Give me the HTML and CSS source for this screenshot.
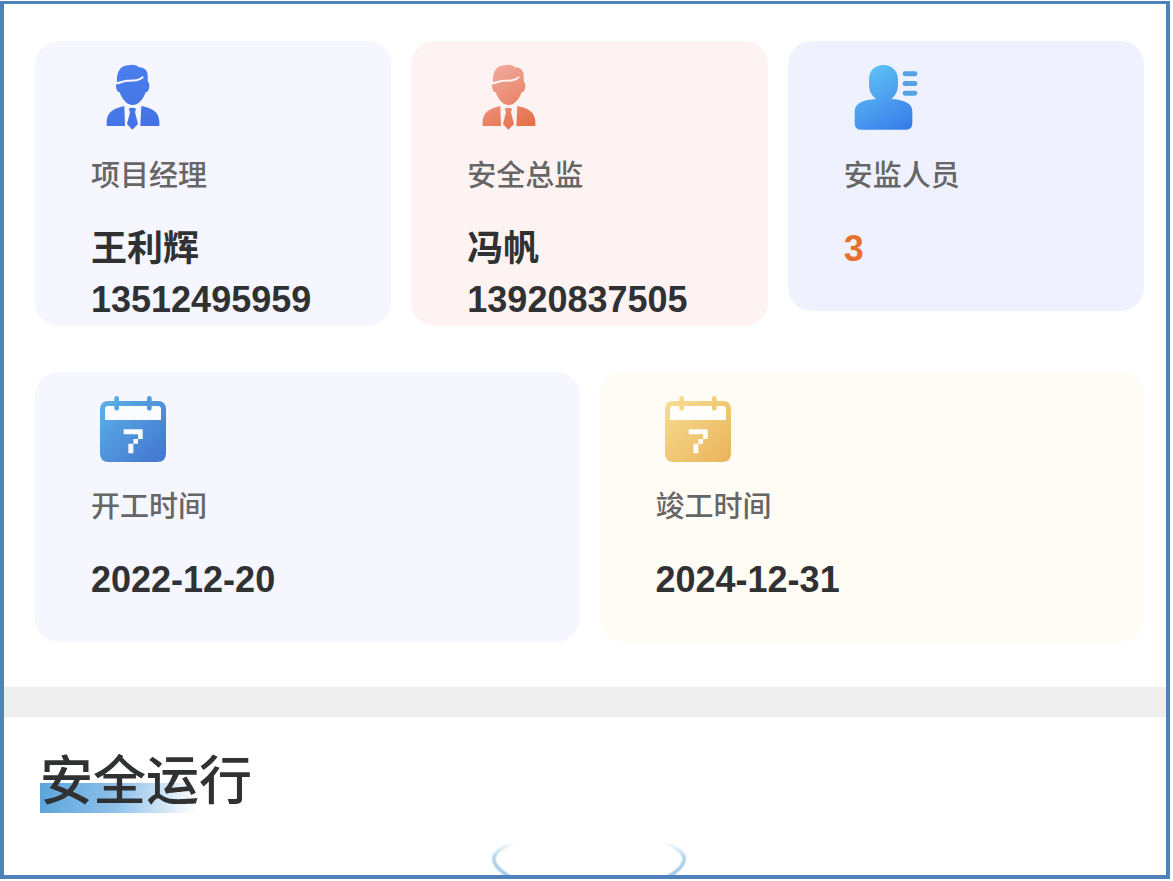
FILE: index.html
```html
<!DOCTYPE html>
<html lang="zh-CN">
<head>
<meta charset="utf-8">
<meta name="viewport" content="width=device-width, initial-scale=1">
<title>安全运行</title>
<link rel="stylesheet" href="styles.css">
</head>
<body>
<svg class="defs" width="0" height="0" aria-hidden="true">
  <defs>
    <linearGradient id="blue" gradientUnits="userSpaceOnUse" x1="100" y1="45" x2="220" y2="240"><stop offset="0" stop-color="#4a80ee"/><stop offset="1" stop-color="#4270e2"/></linearGradient>
    <linearGradient id="coral" gradientUnits="userSpaceOnUse" x1="110" y1="45" x2="220" y2="240"><stop offset="0" stop-color="#f1ab9f"/><stop offset="1" stop-color="#e46d45"/></linearGradient>
    <linearGradient id="azure" gradientUnits="userSpaceOnUse" x1="110" y1="45" x2="230" y2="240"><stop offset="0" stop-color="#60c4f4"/><stop offset="1" stop-color="#377bea"/></linearGradient>
    <linearGradient id="sky" gradientUnits="userSpaceOnUse" x1="70" y1="60" x2="250" y2="240"><stop offset="0" stop-color="#5bb0e6"/><stop offset="1" stop-color="#4375d0"/></linearGradient>
    <linearGradient id="gold" gradientUnits="userSpaceOnUse" x1="70" y1="60" x2="250" y2="240"><stop offset="0" stop-color="#f6dc92"/><stop offset="1" stop-color="#ebb45a"/></linearGradient>
    <symbol id="man" viewBox="33 18 246 246">
      <path d="M111 95C109 70 119 47 144 46C158 42 171 45 177 52C192 51 204 62 203 78L203 94Q208 98 208 107Q208 124 197 127C190 147 176 165 158 165C140 165 126 147 119 127Q108 124 108 107Q108 99 111 95Z"/>
      <path class="parting" d="M109 100C124 98 127 93 141 92C161 92 176 93 188 82"/>
      <path d="M80 228V214C82 190 94 177 133 168L135 228ZM181 228L184 168C222 176 236 188 238 214V228Z"/>
      <path d="M146 176Q157 171 168 176L165 187L174 222L157 239L141 222L150 187Z"/>
    </symbol>
    <symbol id="calendar" viewBox="33 18 246 246">
      <path fill-rule="evenodd" d="M84 60H234Q258 60 258 86V216Q258 243 232 243H86Q60 243 60 216V86Q60 60 84 60ZM86 75Q75 75 75 87V117H243V87Q243 75 232 75Z"/>
      <path class="paper" d="M86 75H232Q243 75 243 87V117H75V87Q75 75 86 75Z"/>
      <rect x="103" y="45" width="14" height="44" rx="7"/>
      <rect x="201" y="45" width="14" height="44" rx="7"/>
      <path class="paper" d="M131 145H188V174H174V188H160V217H145V188H160V174H174V160H131Z"/>
    </symbol>
  </defs>
</svg>
<main class="page">
  <section class="people">
    <article class="card card-blue">
      <svg class="icon" fill="url(#blue)" color="#f5f6ff" aria-hidden="true"><use href="#man"/></svg>
      <h2 class="label">项目经理</h2>
      <p class="value">王利辉</p>
      <p class="value">13512495959</p>
    </article>
    <article class="card card-rose">
      <svg class="icon" fill="url(#coral)" color="#fdf3f3" aria-hidden="true"><use href="#man"/></svg>
      <h2 class="label">安全总监</h2>
      <p class="value">冯帆</p>
      <p class="value">13920837505</p>
    </article>
    <article class="card card-indigo">
      <svg class="icon" viewBox="42 18 246 246" fill="url(#azure)" aria-hidden="true">
        <path d="M117 88C117 61 136 45 160 45C185 45 204 62 204 88V103C204 124 196 138 184 147C218 149 247 158 247 184V220Q247 239 228 239H92Q74 239 74 220V184C74 159 101 149 139 147C125 138 117 124 117 103Z"/>
        <g fill="#53a3e6"><rect x="218" y="64" width="44" height="15" rx="7"/><rect x="218" y="93" width="44" height="15" rx="7"/><rect x="218" y="122" width="44" height="15" rx="7"/></g>
      </svg>
      <h2 class="label">安监人员</h2>
      <p class="value value-count">3</p>
    </article>
  </section>
  <section class="dates">
    <article class="card card-blue">
      <svg class="icon" fill="url(#sky)" color="#fafbff" aria-hidden="true"><use href="#calendar"/></svg>
      <h2 class="label">开工时间</h2>
      <p class="value"><time datetime="2022-12-20">2022-12-20</time></p>
    </article>
    <article class="card card-cream">
      <svg class="icon" fill="url(#gold)" color="#fffefa" aria-hidden="true"><use href="#calendar"/></svg>
      <h2 class="label">竣工时间</h2>
      <p class="value"><time datetime="2024-12-31">2024-12-31</time></p>
    </article>
  </section>
  <section class="operation">
    <h1 class="title">安全运行</h1>
    <svg class="ring" viewBox="0 0 200 34" aria-hidden="true">
      <defs>
        <linearGradient id="fade" x1="0" y1="0" x2="0" y2="34" gradientUnits="userSpaceOnUse"><stop offset="0" stop-color="#dceaf5" stop-opacity="0"/><stop offset=".45" stop-color="#b4d8f2"/><stop offset="1" stop-color="#a5cbea"/></linearGradient>
      </defs>
      <g fill="none" stroke="url(#fade)">
        <path d="M24 2C-1 11 -1 23 21 36M176 2C201 11 201 23 179 36" stroke-width="5" opacity=".4"/>
        <path d="M24 2C-1 11 -1 23 21 36M176 2C201 11 201 23 179 36" stroke-width="3"/>
      </g>
    </svg>
  </section>
</main>
</body>
</html>
```
FILE: styles.css
```css
* {
  box-sizing: border-box;
}

body {
  margin: 0;
  padding: 1px 3px 2px 0;
  min-height: 100vh;
  display: flex;
  background: #fff;
  color: #303133;
  font-family: "Liberation Sans", "Noto Sans CJK SC", sans-serif;
}

.defs {
  position: absolute;
}

.page {
  flex: 1;
  display: flex;
  flex-direction: column;
  border: 4px solid #4f81bd;
  border-top-width: 3px;
}

.people,
.dates {
  display: grid;
  gap: 20px;
  align-items: start;
  padding: 0 22px 0 31px;
}

.people {
  grid-template-columns: repeat(3, 1fr);
  margin-top: 37px;
}

.dates {
  grid-template-columns: repeat(2, 1fr);
  margin: 46px 0 45px;
}

.card {
  min-height: 270px;
  padding: 15px 16px 1px 56px;
  border-radius: 24px;
}

.card-blue {
  background: #f5f6ff;
}

.card-rose {
  background: #fdf3f3;
}

.card-indigo {
  background: #eff2fe;
}

.card-cream {
  background: #fffcf5;
}

.icon {
  display: block;
  width: 82px;
  height: 82px;
}

.parting {
  fill: none;
  stroke: currentColor;
  stroke-width: 6px;
  stroke-linecap: round;
}

.paper {
  fill: currentColor;
}

.label {
  margin: 17px 0 26px;
  color: #666;
  font-size: 29px;
  font-weight: 500;
  line-height: 42px;
}

.value {
  margin: 0;
  font-size: 36px;
  font-weight: 700;
  line-height: 51px;
}

.value-count {
  color: #e8702e;
}

.operation {
  flex: 1;
  display: flex;
  flex-direction: column;
  align-items: flex-start;
  padding: 33px 36px 0;
  border-top: 30px solid #eee;
}

.title {
  margin: 0;
  font-size: 53px;
  font-weight: 500;
  line-height: 63px;
  background: linear-gradient(100deg, #5ba4dc, #8fc1ea 50%, #fff) 0 100% / 156px 30px no-repeat;
}

.ring {
  width: 200px;
  height: 34px;
  margin: auto 0 0 7px;
  align-self: center;
}
```
